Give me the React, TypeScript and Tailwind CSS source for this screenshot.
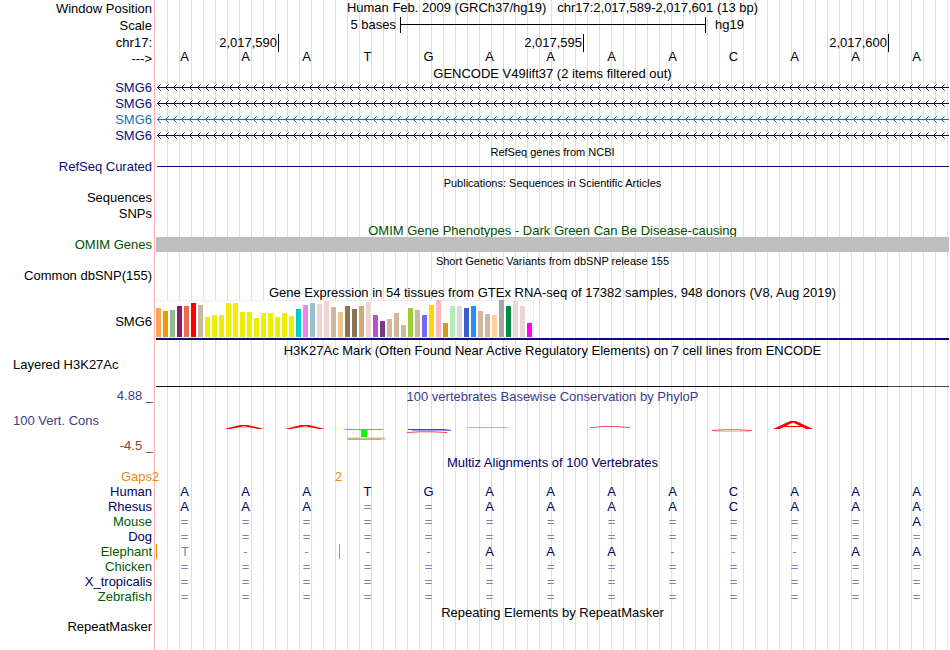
import type { ReactNode } from "react";
import { clsx } from "clsx";

const SEQUENCE = "AAATGAAAACAAA".split("");

const GTEX_BARS: [number, string][] = [
  [29, "#ffa54f"], [26, "#ee9a00"], [27, "#8fbc8f"], [31, "#8b1c62"], [31, "#ee6a50"], [34, "#ff0000"],
  [32, "#cdb79e"], [20, "#eeee00"], [22, "#eeee00"], [22, "#eeee00"], [34, "#eeee00"], [34, "#eeee00"],
  [25, "#eeee00"], [25, "#eeee00"], [19, "#eeee00"], [24, "#eeee00"], [24, "#eeee00"], [20, "#eeee00"],
  [24, "#eeee00"], [21, "#eeee00"], [28, "#00cdcd"], [32, "#ee82ee"], [34, "#9ac0cd"], [33, "#eed5d2"],
  [36, "#eed5d2"], [30, "#cdb79e"], [25, "#eec591"], [31, "#8b7355"], [28, "#8b7355"], [31, "#cdaa7d"],
  [35, "#eed5d2"], [22, "#b452cd"], [16, "#7a378b"], [18, "#cdb79e"], [24, "#cdb79e"], [12, "#cdb79e"],
  [29, "#9acd32"], [27, "#cdb79e"], [22, "#7a67ee"], [32, "#ffd700"], [37, "#ffb6c1"], [14, "#cd9b1d"],
  [31, "#b4eeb4"], [31, "#d9d9d9"], [29, "#3a5fcd"], [31, "#1e90ff"], [26, "#cdb79e"], [23, "#cdb79e"],
  [22, "#ffd39b"], [37, "#a6a6a6"], [31, "#008b45"], [36, "#eed5d2"], [31, "#eed5d2"], [14, "#ff00ff"],
];

const ALIGNMENTS = [
  { species: "Human", bases: "AAATGAAAACAAA", green: false },
  { species: "Rhesus", bases: "AAA==AAAACAAA", green: false },
  { species: "Mouse", bases: "============A", green: true },
  { species: "Dog", bases: "=============", green: false },
  { species: "Elephant", bases: "T----AAA---AA", green: true, gaps: [0, 3] },
  { species: "Chicken", bases: "=============", green: true },
  { species: "X_tropicalis", bases: "=============", green: false },
  { species: "Zebrafish", bases: "=============", green: true },
];

const GENES = [
  { id: 1, color: "text-[#0c0c78]" },
  { id: 2, color: "text-[#0c0c78]" },
  { id: 3, color: "text-[#1470b0]" },
  { id: 4, color: "text-[#0c0c78]" },
];

interface RowProps {
  label?: string;
  labelClass?: string;
  className?: string;
  children?: ReactNode;
}

function Row({ label, labelClass, className, children }: RowProps) {
  return (
    <div className={clsx("flex", className ?? "h-4")}>
      <div className={clsx("w-[156px] shrink-0 self-center pr-1 text-right whitespace-pre", labelClass)}>{label}</div>
      <div className="min-w-0 flex-1">{children}</div>
    </div>
  );
}

function Title({ children, className = "h-4", color = "text-black" }: { children: ReactNode; className?: string; color?: string }) {
  return (
    <Row className={className}>
      <h2 className={clsx("text-center whitespace-pre", color)}>{children}</h2>
    </Row>
  );
}

function GeneLine({ id, color }: { id: number; color: string }) {
  return (
    <svg className={clsx("block h-4 w-full", color)} shapeRendering="crispEdges">
      <defs>
        <pattern id={`strand-${id}`} x="1" width="8" height="16" patternUnits="userSpaceOnUse">
          <g fill="currentColor">
            <rect x="0" y="7" width="8" height="1" />
            <rect x="1" y="6" width="1" height="3" />
            <rect x="2" y="5" width="1" height="1" />
            <rect x="2" y="9" width="1" height="1" />
            <rect x="3" y="4" width="1" height="1" opacity="0.6" />
            <rect x="3" y="10" width="1" height="1" opacity="0.6" />
          </g>
        </pattern>
      </defs>
      <rect x="1" width="100%" height="16" fill={`url(#strand-${id})`} />
    </svg>
  );
}

// Logo marks per base, in a 61x50 box
const CONSERVATION: Record<number, ReactNode> = {
  1: <LowPeak />,
  2: <LowPeak />,
  3: (
    <>
      <rect x="6" y="25" width="38" height="1" fill="#00ff00" />
      <rect x="22" y="25" width="6" height="8" fill="#00ff00" />
      <path d="M8 34.5H46" stroke="#b8b85a" strokeWidth="2" opacity="0.8" />
      <path d="M9 35.5H42" stroke="#f06040" opacity="0.6" />
    </>
  ),
  4: (
    <>
      <path d="M8 25.5H44L51 26.5" fill="none" stroke="#4040ff" />
      <path d="M12 26.5H48" stroke="#4040ff" opacity="0.5" />
      <path d="M7 28.5L20 27.8H33L47 28.5" fill="none" stroke="#ff4040" />
    </>
  ),
  5: <path d="M7 23.5H47" stroke="#ff6060" opacity="0.6" />,
  7: <path d="M7 23.7L20 22.5H33L47 23.7" fill="none" stroke="#ff5050" />,
  9: (
    <>
      <path d="M7 26.5L20 25.8H33L47 26.5" fill="none" stroke="#ff4040" />
      <path d="M9 27.5H45" stroke="#c8b870" opacity="0.6" />
    </>
  ),
  10: (
    <>
      <path d="M7 25L24 17H30L47 25H40L27 18.6L14 25Z" fill="#ff0000" />
      <path d="M16 22.5H38" stroke="#ff0000" />
    </>
  ),
};

function LowPeak() {
  return (
    <>
      <path d="M7 25L23 21H31L47 25H41L27 22.2L13 25Z" fill="#ff0000" />
      <path d="M16 23.5H38" stroke="#ff0000" opacity="0.2" />
    </>
  );
}

export default function App() {
  return (
    <main className="min-h-screen bg-white bg-[linear-gradient(90deg,#fff_154px,#ffb4b4_154px,#ffb4b4_155px,#fff_155px,#fff_156px,transparent_156px),repeating-linear-gradient(90deg,transparent_0px,transparent_11px,#dcdcf8_11px,#dcdcf8_12px)] pr-px font-['Liberation_Sans',Arial,sans-serif] text-[13px] leading-4 text-black">
      <Row label="Window Position" labelClass="pt-[2px]">
        <h1 className="text-center whitespace-pre">Human Feb. 2009 (GRCh37/hg19)   chr17:2,017,589-2,017,601 (13 bp)</h1>
      </Row>
      <Row label="Scale" labelClass="pt-px" className="h-[18px]">
        <div className="grid grid-cols-13 pt-px">
          <div className="col-span-4 pr-1 text-right">5 bases</div>
          <div className="col-span-5 h-4 border-l border-black">
            <div className="h-2 border-b border-black" />
          </div>
          <div className="col-span-4 h-4 border-l border-black pl-[9px]">hg19</div>
        </div>
      </Row>
      <Row label="chr17:" labelClass="pt-[2px]">
        <div className="grid h-[15px] grid-cols-13 leading-[18px]">
          <div className="col-span-2 pr-px text-right">2,017,590</div>
          <div className="col-span-5 border-l border-black pr-px text-right">2,017,595</div>
          <div className="col-span-5 border-l border-black pr-px text-right">2,017,600</div>
          <div className="border-l border-black" />
        </div>
      </Row>
      <Row label="--->" labelClass="pt-px">
        <div className="grid grid-cols-13 leading-[14px]">
          {SEQUENCE.map((base, i) => (
            <span key={i} className="pr-1 text-center">{base}</span>
          ))}
        </div>
      </Row>

      <Title className="h-[14px]">GENCODE V49lift37 (2 items filtered out)</Title>
      {GENES.map((gene) => (
        <Row key={gene.id} label="SMG6" labelClass={gene.color}>
          <GeneLine id={gene.id} color={gene.color} />
        </Row>
      ))}

      <Title className="h-[15px] text-[11px]">RefSeq genes from NCBI</Title>
      <Row label="RefSeq Curated" labelClass="text-[#0c0c78]">
        <div className="ml-px h-2 border-b border-[#0c0c78]" />
      </Row>

      <Title className="h-[15px] text-[11px]">Publications: Sequences in Scientific Articles</Title>
      <Row label="Sequences" />
      <Row label="SNPs" />

      <Title className="h-[15px] pt-px" color="text-[#005000]">OMIM Gene Phenotypes - Dark Green Can Be Disease-causing</Title>
      <Row label="OMIM Genes" labelClass="text-[#005000]" className="h-[15px]">
        <div className="h-[15px] bg-[#bebebe]" />
      </Row>

      <Title className="h-4 pt-px text-[11px]">Short Genetic Variants from dbSNP release 155</Title>
      <Row label="Common dbSNP(155)" />

      <Title className="h-4 pt-px">Gene Expression in 54 tissues from GTEx RNA-seq of 17382 samples, 948 donors (V8, Aug 2019)</Title>
      <Row label="SMG6" className="h-[43px]">
        <div className="border-b-2 border-[#0c0c78]">
          <div className="flex h-[38px] w-[378px] items-end gap-[2px] border-t border-r border-b border-[#eeeeee] bg-white">
            {GTEX_BARS.map(([height, color], i) => (
              <div key={i} className="w-[5px] shrink-0" style={{ height, backgroundColor: color }} />
            ))}
          </div>
        </div>
      </Row>

      <Title className="h-[14px]">H3K27Ac Mark (Often Found Near Active Regulatory Elements) on 7 cell lines from ENCODE</Title>
      <Row label="Layered H3K27Ac" labelClass="pl-[13px] text-left!" />
      <Row className="h-[15px]">
        <div className="grid h-[14px] grid-cols-13">
          <div className="col-span-12 border-b border-[#141420]" />
          <div className="border-b border-[#305050]" />
        </div>
      </Row>

      <Row label="4.88 _" labelClass="text-[#3c3c8c] pr-[3px]!">
        <h2 className="pt-px text-center text-[#3c3c8c]">100 vertebrates Basewise Conservation by PhyloP</h2>
      </Row>
      <div className="flex h-[50px]">
        <div className="flex w-[156px] shrink-0 flex-col justify-end gap-[9px]">
          <span className="pl-[13px] text-[#3c3c8c]">100 Vert. Cons</span>
          <span className="pr-[3px] text-right text-[#8c3c3c]">-4.5 _</span>
        </div>
        <div className="grid flex-1 grid-cols-13">
          {SEQUENCE.map((_, i) => (
            <svg key={i} viewBox="0 0 61 50" className="h-[50px] w-full">
              {CONSERVATION[i]}
            </svg>
          ))}
        </div>
      </div>

      <Title className="h-[15px] pt-px" color="text-[#000064]">Multiz Alignments of 100 Vertebrates</Title>
      <table className="w-full table-fixed border-collapse leading-[15px]">
        <colgroup>
          <col className="w-[156px]" />
          <col span={13} />
        </colgroup>
        <tbody>
          <tr className="h-[15px] text-[#e68a10]">
            <th scope="row" className="p-0 pr-1 text-right font-normal">Gaps</th>
            {SEQUENCE.map((_, i) => (
              <td key={i} className="p-0">
                {(i === 0 || i === 3) && <div className="-ml-1">2</div>}
              </td>
            ))}
          </tr>
          {ALIGNMENTS.map(({ species, bases, green, gaps }) => (
            <tr key={species} className="h-[15px]">
              <th scope="row" className={clsx("p-0 pr-1 text-right font-normal", green ? "text-[#005a00]" : "text-[#000064]")}>
                {species}
              </th>
              {bases.split("").map((base, i) => {
                const weak = base === "=" || base === "-" || (species === "Elephant" && base === "T");
                return (
                  <td key={i} className="p-0">
                    <div
                      className={clsx(
                        "pr-1 text-center",
                        weak ? "text-[#8080b4]" : "text-[#000064]",
                        gaps?.includes(i) && "border-l border-l-[#e68a10]"
                      )}
                    >
                      {base}
                    </div>
                  </td>
                );
              })}
            </tr>
          ))}
        </tbody>
      </table>

      <Title className="h-[15px] pt-px">Repeating Elements by RepeatMasker</Title>
      <Row label="RepeatMasker" />
    </main>
  );
}
